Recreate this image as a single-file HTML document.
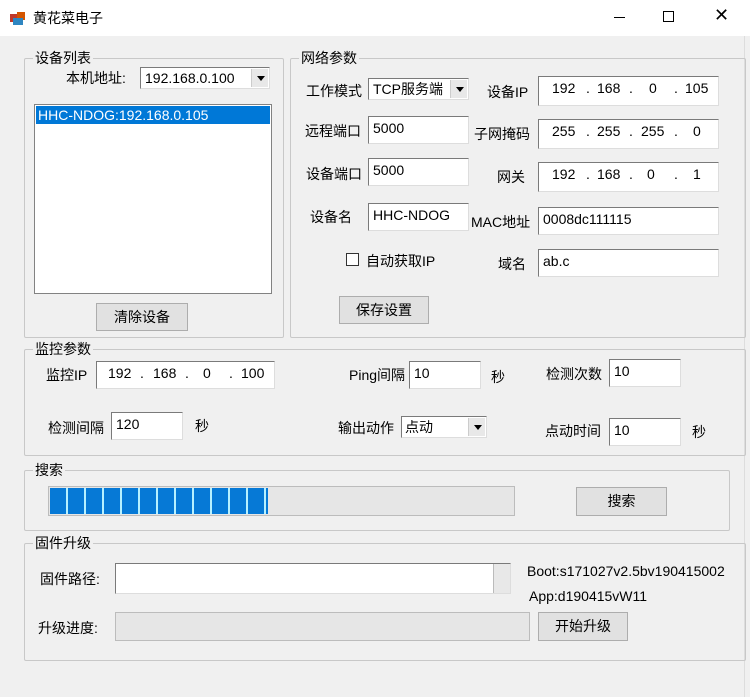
<!DOCTYPE html>
<html><head><meta charset="utf-8"><style>
*{box-sizing:border-box;margin:0;padding:0}
body{width:750px;height:697px;background:#f0f0f0;font-family:"Liberation Sans","Noto Sans CJK SC",sans-serif;font-size:14px;color:#000;position:relative;overflow:hidden}
.a{position:absolute}
.title{left:0;top:0;width:750px;height:36px;background:#fff}
.grp{position:absolute;border:1px solid #c8c8c8;border-radius:2px}
.lg{position:absolute;top:-9px;left:8px;background:#f0f0f0;padding:0 2px;font-size:14px;line-height:16px}
.ed{position:absolute;background:#fff;border:1px solid #7a7a7a;border-right-color:#ddd;border-bottom-color:#ddd;padding:3px 4px;font-size:14px;line-height:16px}
.btn{position:absolute;background:#e1e1e1;border:1px solid #adadad;text-align:center;font-size:14px}
.lb{position:absolute;font-size:14px;line-height:16px;white-space:nowrap}
.dd{position:absolute;right:1px;top:1px;bottom:1px;width:17px;background:#e8e8e8;border-left:1px solid #ccc}
.dd:after{content:"";position:absolute;left:5px;top:7px;border:4px solid transparent;border-top:5px solid #000}
.ip span{position:absolute;top:3px}
</style></head><body>
<div class="a title">
 <svg class="a" style="left:9px;top:10px" width="18" height="16"><rect x="1" y="4" width="8" height="8" fill="#c0392b"/><rect x="8" y="2" width="8" height="8" fill="#d35400"/><rect x="4" y="8" width="10" height="7" fill="#2e86c1"/></svg>
 <div class="lb" style="left:33px;top:10px;font-size:14px">黄花菜电子</div>
 <div class="a" style="left:614px;top:17px;width:11px;height:1px;background:#000"></div>
 <div class="a" style="left:663px;top:11px;width:11px;height:11px;border:1px solid #000"></div>
 <div class="lb" style="left:714px;top:7px;font-size:18px;font-weight:300">✕</div>
</div>
<div class="a" style="left:744px;top:36px;width:1px;height:661px;background:#ddd"></div>

<div class="grp" style="left:24px;top:58px;width:260px;height:280px"><div class="lg">设备列表</div></div>
<div class="lb" style="left:66px;top:70px">本机地址:</div>
<div class="ed" style="left:140px;top:67px;width:130px;height:22px;padding:2px 4px">192.168.0.100<div class="dd"></div></div>
<div class="a" style="left:34px;top:104px;width:238px;height:190px;background:#fff;border:1px solid #828282"></div>
<div class="a" style="left:36px;top:106px;width:234px;height:18px;background:#0078d7;color:#fff;padding:1px 2px;line-height:16px">HHC-NDOG:192.168.0.105</div>
<div class="btn" style="left:96px;top:303px;width:92px;height:28px;line-height:26px">清除设备</div>

<div class="grp" style="left:290px;top:58px;width:456px;height:280px"><div class="lg">网络参数</div></div>
<div class="lb" style="left:306px;top:83px">工作模式</div>
<div class="ed" style="left:368px;top:78px;width:101px;height:22px;padding:2px 4px">TCP服务端<div class="dd"></div></div>
<div class="lb" style="left:305px;top:123px">远程端口</div>
<div class="ed" style="left:368px;top:116px;width:101px;height:28px">5000</div>
<div class="lb" style="left:306px;top:166px">设备端口</div>
<div class="ed" style="left:368px;top:158px;width:101px;height:28px">5000</div>
<div class="lb" style="left:310px;top:209px">设备名</div>
<div class="ed" style="left:368px;top:203px;width:101px;height:28px">HHC-NDOG</div>
<div class="a" style="left:346px;top:253px;width:13px;height:13px;background:#fff;border:1px solid #333"></div>
<div class="lb" style="left:366px;top:253px">自动获取IP</div>
<div class="btn" style="left:339px;top:296px;width:90px;height:28px;line-height:26px">保存设置</div>

<div class="lb" style="left:487px;top:84px">设备IP</div>
<div class="ed ip" style="left:538px;top:76px;width:181px;height:30px"><span style="left:13px">192</span><span style="left:47px">.</span><span style="left:58px">168</span><span style="left:90px">.</span><span style="left:110px">0</span><span style="left:135px">.</span><span style="left:146px">105</span></div>
<div class="lb" style="left:474px;top:126px">子网掩码</div>
<div class="ed ip" style="left:538px;top:119px;width:181px;height:30px"><span style="left:13px">255</span><span style="left:47px">.</span><span style="left:58px">255</span><span style="left:90px">.</span><span style="left:102px">255</span><span style="left:135px">.</span><span style="left:154px">0</span></div>
<div class="lb" style="left:497px;top:169px">网关</div>
<div class="ed ip" style="left:538px;top:162px;width:181px;height:30px"><span style="left:13px">192</span><span style="left:47px">.</span><span style="left:58px">168</span><span style="left:90px">.</span><span style="left:108px">0</span><span style="left:135px">.</span><span style="left:154px">1</span></div>
<div class="lb" style="left:471px;top:214px">MAC地址</div>
<div class="ed" style="left:538px;top:207px;width:181px;height:28px">0008dc111115</div>
<div class="lb" style="left:498px;top:256px">域名</div>
<div class="ed" style="left:538px;top:249px;width:181px;height:28px">ab.c</div>

<div class="grp" style="left:24px;top:349px;width:722px;height:107px"><div class="lg">监控参数</div></div>
<div class="lb" style="left:46px;top:367px">监控IP</div>
<div class="ed ip" style="left:96px;top:361px;width:179px;height:28px"><span style="left:11px">192</span><span style="left:43px">.</span><span style="left:56px">168</span><span style="left:88px">.</span><span style="left:106px">0</span><span style="left:132px">.</span><span style="left:144px">100</span></div>
<div class="lb" style="left:349px;top:367px">Ping间隔</div>
<div class="ed" style="left:409px;top:361px;width:72px;height:28px">10</div>
<div class="lb" style="left:491px;top:369px">秒</div>
<div class="lb" style="left:546px;top:366px">检测次数</div>
<div class="ed" style="left:609px;top:359px;width:72px;height:28px">10</div>
<div class="lb" style="left:48px;top:420px">检测间隔</div>
<div class="ed" style="left:111px;top:412px;width:72px;height:28px">120</div>
<div class="lb" style="left:195px;top:418px">秒</div>
<div class="lb" style="left:338px;top:420px">输出动作</div>
<div class="ed" style="left:401px;top:416px;width:86px;height:22px;padding:2px 3px">点动<div class="dd"></div></div>
<div class="lb" style="left:545px;top:423px">点动时间</div>
<div class="ed" style="left:609px;top:418px;width:72px;height:28px">10</div>
<div class="lb" style="left:692px;top:424px">秒</div>

<div class="grp" style="left:24px;top:470px;width:706px;height:61px"><div class="lg">搜索</div></div>
<div class="a" style="left:48px;top:486px;width:467px;height:30px;background:#e6e6e6;border:1px solid #bcbcbc"></div>
<div class="a" style="left:50px;top:488px;height:26px;width:218px;background:repeating-linear-gradient(90deg,#0679d6 0,#0679d6 16px,#b6f0ff 16px,#b6f0ff 18px)"></div>
<div class="btn" style="left:576px;top:487px;width:91px;height:29px;line-height:27px">搜索</div>

<div class="grp" style="left:24px;top:543px;width:722px;height:118px"><div class="lg">固件升级</div></div>
<div class="lb" style="left:40px;top:571px">固件路径:</div>
<div class="ed" style="left:115px;top:563px;width:396px;height:31px"><div class="a" style="right:0;top:0;bottom:0;width:17px;background:#e8e8e8;border-left:1px solid #bbb"></div></div>
<div class="lb" style="left:527px;top:563px">Boot:s171027v2.5bv190415002</div>
<div class="lb" style="left:529px;top:588px">App:d190415vW11</div>
<div class="lb" style="left:38px;top:620px">升级进度:</div>
<div class="a" style="left:115px;top:612px;width:415px;height:29px;background:#e6e6e6;border:1px solid #bcbcbc"></div>
<div class="btn" style="left:538px;top:612px;width:90px;height:29px;line-height:27px">开始升级</div>
</body></html>
